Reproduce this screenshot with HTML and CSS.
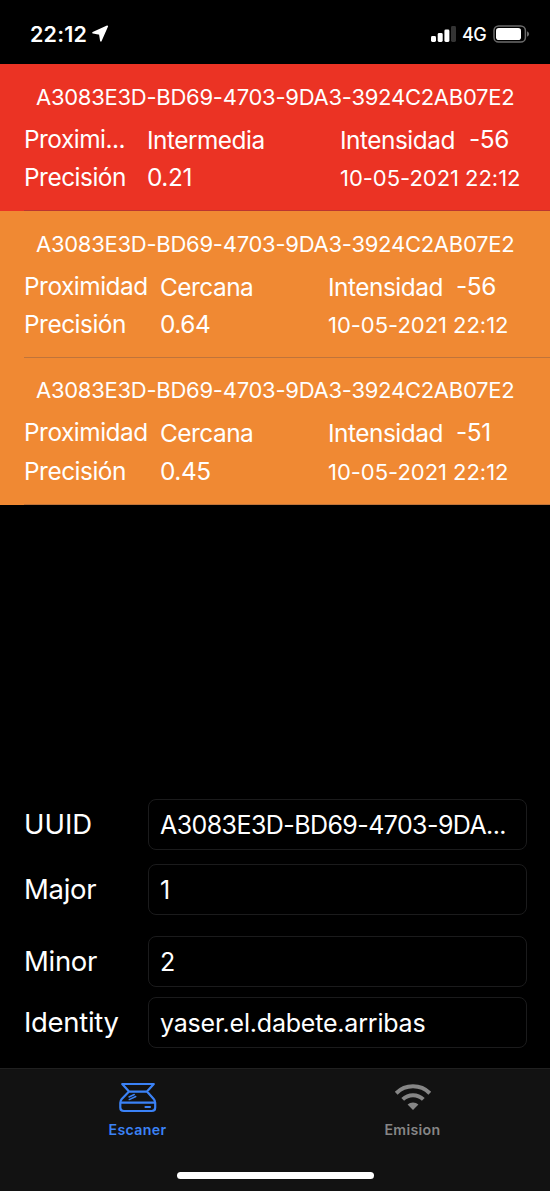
FILE: index.html
```html
<!DOCTYPE html>
<html lang="es">
<head>
<meta charset="utf-8">
<title>Escaner</title>
<link rel="stylesheet" href="styles.css">
</head>
<body>
<div class="screen">
  <header class="status">
    <span class="clock">22:12</span>
    <svg class="location" width="17" height="17" viewBox="0 0 17 17"><path d="M1 7.8 15.3 1.3 8.9 15.8 7.8 9Z" fill="#fff" stroke="#fff" stroke-width="1.6" stroke-linejoin="round"/></svg>
    <svg class="signal" width="27" height="18" viewBox="0 0 27 18"><g fill="#fff"><rect x="1" y="11" width="5" height="6" rx="1.4"/><rect x="7.7" y="8" width="5" height="9" rx="1.4"/><rect x="14.4" y="4.5" width="5" height="12.5" rx="1.4"/></g><rect x="21" y="1" width="5" height="16" rx="1.4" fill="#343434"/></svg>
    <span class="network">4G</span>
    <svg class="battery" width="38" height="18" viewBox="0 0 38 18"><rect x="1" y="1" width="31.4" height="16" rx="4.6" fill="none" stroke="#6b6b6b" stroke-width="1.5"/><rect x="3" y="3" width="25" height="12" rx="2.8" fill="#fff"/><path d="M34 6.2q2.2 1 2.2 2.8T34 11.8Z" fill="#6b6b6b"/></svg>
  </header>
  <main class="list">
    <section class="beacon immediate">
      <div class="uuid">A3083E3D-BD69-4703-9DA3-3924C2AB07E2</div>
      <div class="row"><span class="name cut">Proximi...</span><span class="value word">Intermedia</span><span class="power">Intensidad</span><span class="db">-56</span></div>
      <div class="row"><span class="name">Precisión</span><span class="value">0.21</span><span class="date">10-05-2021 22:12</span></div>
    </section>
    <section class="beacon near">
      <div class="uuid">A3083E3D-BD69-4703-9DA3-3924C2AB07E2</div>
      <div class="row"><span class="name">Proximidad</span><span class="value word">Cercana</span><span class="power">Intensidad</span><span class="db">-56</span></div>
      <div class="row"><span class="name">Precisión</span><span class="value">0.64</span><span class="date">10-05-2021 22:12</span></div>
    </section>
    <section class="beacon near">
      <div class="uuid">A3083E3D-BD69-4703-9DA3-3924C2AB07E2</div>
      <div class="row"><span class="name">Proximidad</span><span class="value word">Cercana</span><span class="power">Intensidad</span><span class="db">-51</span></div>
      <div class="row"><span class="name">Precisión</span><span class="value">0.45</span><span class="date">10-05-2021 22:12</span></div>
    </section>
  </main>
  <form class="form">
    <div class="field"><span class="label l-uuid">UUID</span><div class="box b-uuid">A3083E3D-BD69-4703-9DA...</div></div>
    <div class="field"><span class="label">Major</span><div class="box">1</div></div>
    <div class="field minor"><span class="label">Minor</span><div class="box">2</div></div>
    <div class="field"><span class="label l-identity">Identity</span><div class="box b-identity">yaser.el.dabete.arribas</div></div>
  </form>
  <footer class="tabs">
    <div class="tab active">
      <svg width="40" height="32" viewBox="0 0 40 32" fill="none" stroke="#3b82f6" stroke-width="2.2" stroke-linejoin="round" stroke-linecap="round"><path d="M4.2 2H35.8L29 9.6H11ZM11 9.6 3.8 17Q2.3 18.7 2.3 20.8V25.5Q2.3 29 5.8 29H33.7Q37.2 29 37.2 25.5V20.8Q37.2 18.7 35.7 17L29 9.6M2.5 20.6H37M27.5 25H32"/><path d="M11 15 16.3 12.5M11.2 17.6 17.8 14.5" stroke-width="1.4"/></svg>
      <span>Escaner</span>
    </div>
    <div class="tab">
      <svg width="40" height="32" viewBox="0 0 40 32" fill="none" stroke="#868686" stroke-width="4"><path d="M3.2 11.2A24 24 0 0 1 36.8 11.2M9.7 17.4A14.8 14.8 0 0 1 30.3 17.4"/><path d="M20 28 14.6 22.6A7.7 7.7 0 0 1 25.4 22.6Z" fill="#868686" stroke="none"/></svg>
      <span>Emision</span>
    </div>
    <div class="home"></div>
  </footer>
</div>
</body>
</html>
```
FILE: styles.css
```css
* { box-sizing: border-box; }
body { margin: 0; background: #000; color: #fff; font-family: Inter, "Liberation Sans", sans-serif; }
.screen { width: 550px; height: 1191px; display: flex; flex-direction: column; overflow: hidden; white-space: nowrap; }
svg { display: block; flex: none; }
.status { height: 64px; padding: 4px 19px 0 30px; display: flex; align-items: center; }
.clock { width: 62px; font-size: 21.5px; font-weight: 600; letter-spacing: .2px; }
.location { margin-top: -2px; }
.signal { margin-left: auto; }
.network { width: 31px; margin-left: 5px; font-size: 18px; font-weight: 500; letter-spacing: -.5px; }
.list { height: 735px; }
.beacon { position: relative; height: 146.9px; padding: 17.7px 0 0 24px; }
.beacon::after { content: ""; position: absolute; left: 24px; right: 0; bottom: 0; height: 1px; background: rgba(70, 60, 80, .28); }
.immediate { --value: 123px; --power: 316px; --db: 445px; background: #eb3324; }
.near { --value: 136px; --power: 304px; --db: 432px; background: #f08933; }
.uuid { height: 30px; margin: 0 0 8px 12px; font-size: 22px; line-height: 30px; letter-spacing: -.26px; }
.row { height: 38.3px; display: grid; grid-template-columns: var(--value) calc(var(--power) - var(--value)) calc(var(--db) - var(--power)) 1fr; font-size: 24.4px; line-height: 38px; letter-spacing: -.48px; }
.cut { letter-spacing: -.5px; }
.value, .db { letter-spacing: -.4px; }
.word { letter-spacing: -.5px; }
.word, .power { padding-top: 1px; }
.date { grid-column: 3 / 5; font-size: 22px; letter-spacing: -.03px; }
.row .date { line-height: 40px; }
.form { height: 269px; padding: 0 23px 0 24px; }
.field { height: 51px; display: flex; align-items: center; margin-bottom: 13.5px; }
.minor { margin-top: 21px; margin-bottom: 10.5px; }
.label { width: 124px; font-size: 27.5px; letter-spacing: -.3px; }
.l-uuid { letter-spacing: 0; }
.l-uuid, .l-identity { padding-bottom: 2px; }
.box { flex: 1; height: 51px; padding-left: 11px; border: 1.4px solid #1b1b1c; border-radius: 8px; font-size: 25px; line-height: 50px; }
.b-uuid { letter-spacing: -.58px; }
.b-identity { letter-spacing: -.2px; }
.tabs { position: relative; height: 123px; padding-top: 13px; border-top: 1px solid #202020; background: #121212; display: grid; grid-template-columns: 1fr 1fr; }
.tab { display: flex; flex-direction: column; align-items: center; color: #868686; font-size: 14.2px; font-weight: 600; line-height: 18px; letter-spacing: .32px; }
.tab svg { margin-bottom: 7px; }
.active { color: #3b82f6; }
.home { position: absolute; left: 177px; top: 103px; width: 197px; height: 7px; border-radius: 4px; background: #fff; }
```
